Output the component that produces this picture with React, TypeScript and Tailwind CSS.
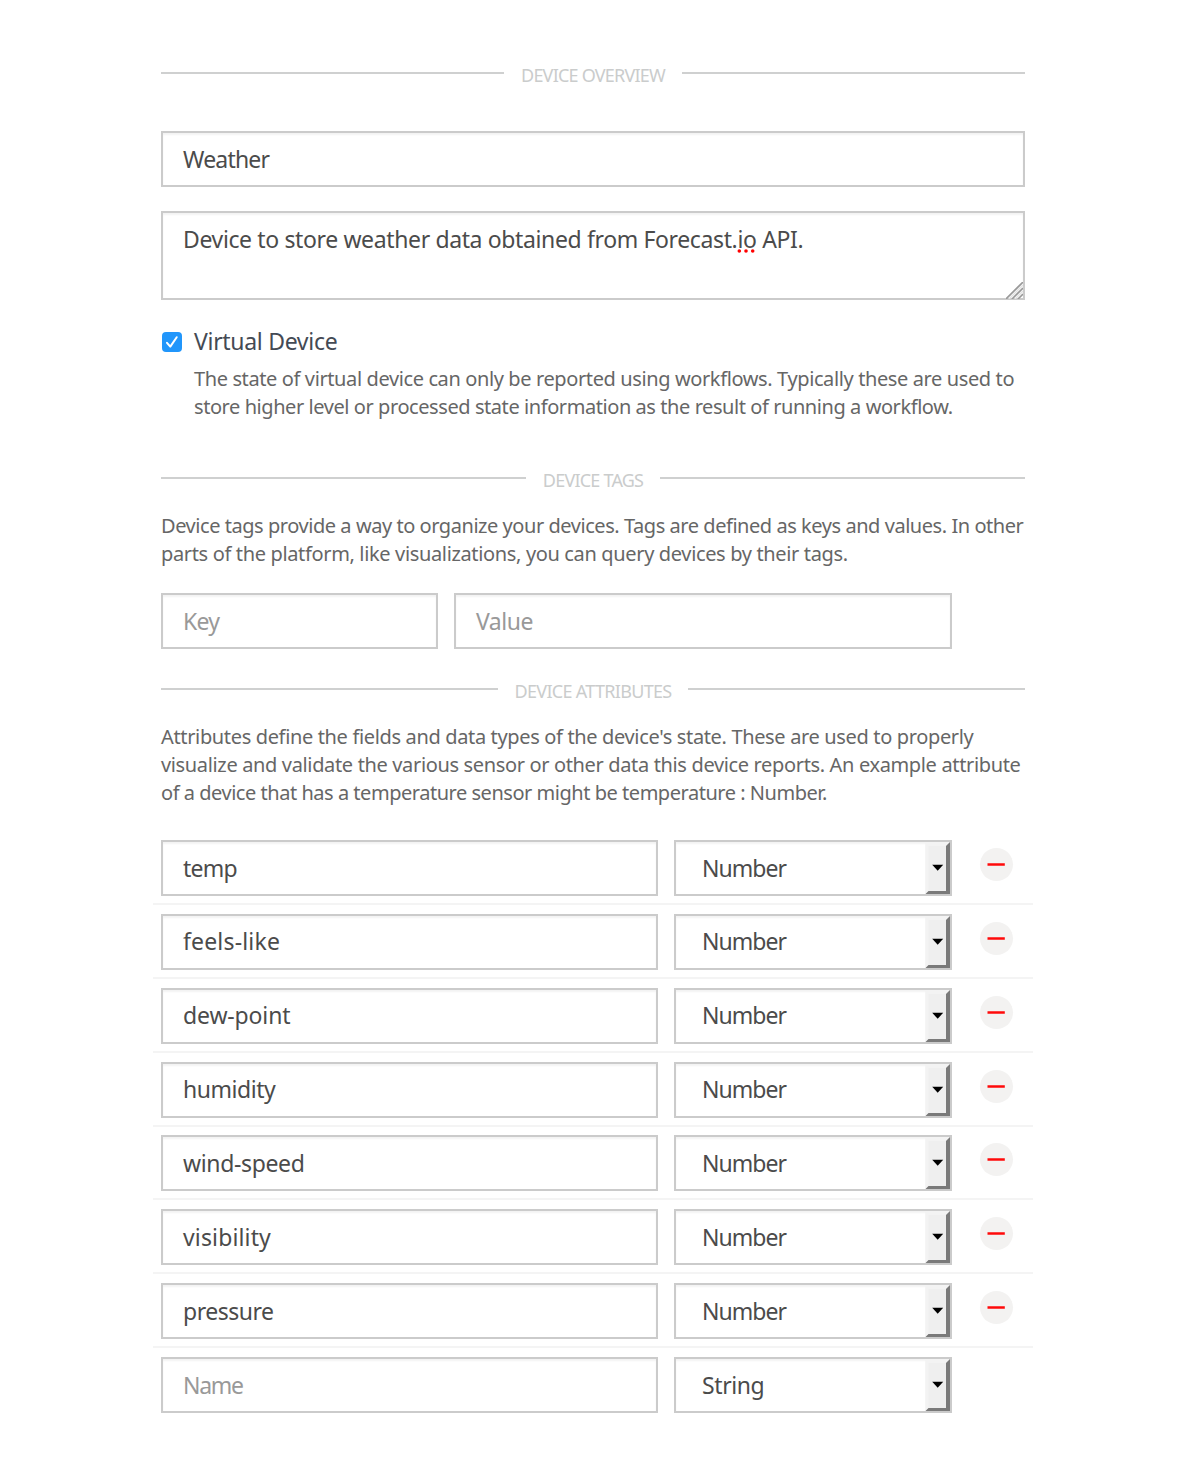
import type { ReactNode } from "react";

const field =
  "flex h-14 items-center border-2 border-[#cbcbcb] bg-white pl-[20px] pb-[1px] text-[23px] leading-[32px] text-[#4b4b4b] whitespace-nowrap shadow-[inset_0_2px_2px_rgba(0,0,0,0.05)]";

function SectionTitle({ children, tracking }: { children: ReactNode; tracking: string }) {
  return (
    <div className="flex h-6 items-center gap-[17px]">
      <div className="mb-[5px] h-[2px] flex-1 bg-[#cfd0d0]" />
      <h2 className={`text-[18px] leading-6 whitespace-nowrap text-[#cacccc] ${tracking}`}>{children}</h2>
      <div className="mb-[5px] h-[2px] flex-1 bg-[#cfd0d0]" />
    </div>
  );
}

function Select({ value, tracking }: { value: string; tracking: string }) {
  return (
    <div className="flex h-14 w-[278px] items-stretch border-2 border-[#cbcbcb] bg-white pl-[26px] text-[23px] leading-[32px] text-[#4b4b4b] shadow-[inset_0_2px_2px_rgba(0,0,0,0.05)]">
      <span className={`flex-1 self-center pb-[1px] whitespace-nowrap ${tracking}`}>{value}</span>
      <svg width="25" height="52" viewBox="0 0 25 52">
        <path d="M0.5 1H25V52H0.5Z" fill="#efefef" />
        <path d="M0.5 1H24L21 4H3.5V49L0.5 52Z" fill="#f3f3f3" />
        <path d="M25 0V52H0.5L3.5 49H21V4Z" fill="#7a7a7a" />
        <path d="M7.2 22.8H18.2L12.7 28.8Z" fill="#000" />
      </svg>
    </div>
  );
}

function RemoveButton() {
  return (
    <button
      type="button"
      aria-label="Remove attribute"
      className="mt-[8px] ml-[27.5px] flex size-[33px] items-center justify-center self-start rounded-full bg-[#f3f2f1]"
    >
      <svg width="18" height="3" viewBox="0 0 18 3">
        <path d="M0.5 1.5H17.8" stroke="#ff0a0a" strokeWidth="2.5" />
      </svg>
    </button>
  );
}

const attributes = [
  { name: "temp", tracking: "tracking-[-0.8px]" },
  { name: "feels-like", tracking: "tracking-[0.17px]" },
  { name: "dew-point", tracking: "tracking-[-0.14px]" },
  { name: "humidity", tracking: "tracking-[-0.45px]" },
  { name: "wind-speed", tracking: "tracking-[-0.35px]" },
  { name: "visibility", tracking: "tracking-[0.14px]" },
  { name: "pressure", tracking: "tracking-[-0.48px]" },
];

export default function App() {
  return (
    <main className="h-[1464px] bg-white pt-[63px] pl-[161px] font-['Noto_Sans',sans-serif]">
      <div className="w-[864px]">
        <SectionTitle tracking="tracking-[-0.78px]">DEVICE OVERVIEW</SectionTitle>

        <div className={`mt-[44px] ${field} tracking-[-0.8px]`}>Weather</div>

        <div className="relative mt-6 h-[89px] border-2 border-[#cbcbcb] pt-[10px] pl-[20px] text-[23px] leading-[32px] tracking-[-0.37px] whitespace-nowrap text-[#4b4b4b] shadow-[inset_0_2px_2px_rgba(0,0,0,0.05)]">
          Device to store weather data obtained from Forecast.
          <span className="relative">
            io
            <svg className="absolute top-[26px] left-0" width="19" height="4" viewBox="0 0 19 4">
              <circle cx="2.3" cy="2" r="1.8" fill="#f00" />
              <circle cx="9" cy="2" r="1.8" fill="#f00" />
              <circle cx="15.7" cy="2" r="1.8" fill="#f00" />
            </svg>
          </span>{" "}
          API.
          <svg className="absolute right-0 bottom-[-1px]" width="17" height="17" viewBox="0 0 17 17">
            <path d="M0 17L17 0M6 17L17 6M12 17L17 12" stroke="#999" strokeWidth="1.6" />
            <path d="M3 17L17 3M9 17L17 9" stroke="#e2e2e2" strokeWidth="1.4" />
          </svg>
        </div>

        <div className="mt-[25px] flex items-start">
          <div className="mt-[7px] ml-[1px] flex size-5 items-center justify-center rounded-[4px] bg-[#2196fb]">
            <svg width="20" height="20" viewBox="0 0 20 20" fill="none">
              <path d="M5 10.8L8.3 14.6L14.7 5.2" stroke="#fff" strokeWidth="2" strokeLinecap="round" strokeLinejoin="round" />
            </svg>
          </div>
          <div className="ml-[12px]">
            <div className="text-[23px] leading-[32px] tracking-[-0.3px] text-[#444a54]">Virtual Device</div>
            <div className="mt-[8px] text-[20px] leading-[28px] whitespace-nowrap text-[#666]">
              <div className="tracking-[-0.385px]">
                The state of virtual device can only be reported using workflows. Typically these are used to
              </div>
              <div className="tracking-[-0.43px]">
                store higher level or processed state information as the result of running a workflow.
              </div>
            </div>
          </div>
        </div>

        <div className="mt-[47px]">
          <SectionTitle tracking="tracking-[-0.78px]">DEVICE TAGS</SectionTitle>
        </div>
        <div className="mt-[20px] text-[20px] leading-[28px] whitespace-nowrap text-[#666]">
          <div className="tracking-[-0.45px]">
            Device tags provide a way to organize your devices. Tags are defined as keys and values. In other
          </div>
          <div className="tracking-[-0.35px]">
            parts of the platform, like visualizations, you can query devices by their tags.
          </div>
        </div>
        <div className="mt-[25px] flex gap-4">
          <div className={`${field} w-[277px]`}>
            <span className="tracking-[-0.7px] text-[#999]">Key</span>
          </div>
          <div className={`${field} w-[498px]`}>
            <span className="tracking-[-0.5px] text-[#999]">Value</span>
          </div>
        </div>

        <div className="mt-[30px]">
          <SectionTitle tracking="tracking-[-0.7px]">DEVICE ATTRIBUTES</SectionTitle>
        </div>
        <div className="mt-[19.5px] text-[20px] leading-[28.2px] whitespace-nowrap text-[#666]">
          <div className="tracking-[-0.35px]">
            Attributes define the fields and data types of the device's state. These are used to properly
          </div>
          <div className="tracking-[-0.35px]">
            visualize and validate the various sensor or other data this device reports. An example attribute
          </div>
          <div className="tracking-[-0.47px]">
            of a device that has a temperature sensor might be temperature : Number.
          </div>
        </div>

        <div className="-mx-2 mt-[24px]">
          {attributes.map((a) => (
            <div key={a.name} className="flex h-[73.86px] border-b-2 border-[#f4f4f4] px-2 pt-[8.9px]">
              <div className={`${field} w-[497px]`}>
                <span className={a.tracking}>{a.name}</span>
              </div>
              <div className="ml-4">
                <Select value="Number" tracking="tracking-[-0.95px]" />
              </div>
              <RemoveButton />
            </div>
          ))}
          <div className="flex px-2 pt-[8.9px]">
            <div className={`${field} w-[497px]`}>
              <span className="tracking-[-1.3px] text-[#999]">Name</span>
            </div>
            <div className="ml-4">
              <Select value="String" tracking="tracking-[-0.4px]" />
            </div>
          </div>
        </div>
      </div>
    </main>
  );
}
